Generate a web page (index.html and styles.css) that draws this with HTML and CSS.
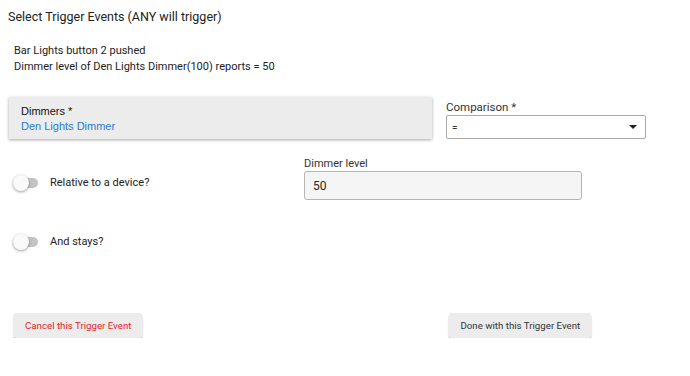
FILE: index.html
```html
<!DOCTYPE html>
<html lang="en">

<head>
    <meta charset="utf-8">
    <title>Select Trigger Events</title>
    <link rel="stylesheet" href="styles.css">
</head>

<body>
    <div class="page">
        <h2 class="title">Select Trigger Events (ANY will trigger)</h2>

        <div class="summary">
            <div>Bar Lights button 2 pushed</div>
            <div>Dimmer level of Den Lights Dimmer(100) reports = 50</div>
        </div>

        <div class="row top-row">
            <div class="card">
                <div class="card-label">Dimmers *</div>
                <div class="card-value">Den Lights Dimmer</div>
            </div>
            <div class="field compare">
                <label class="field-label">Comparison *</label>
                <div class="select">
                    <span>=</span>
                    <span class="caret"></span>
                </div>
            </div>
        </div>

        <div class="row mid-row">
            <div class="toggle-item">
                <span class="switch"><span class="knob"></span></span>
                <span>Relative to a device?</span>
            </div>
            <div class="field level">
                <label class="field-label">Dimmer level</label>
                <div class="input">50</div>
            </div>
        </div>

        <div class="row stays-row">
            <div class="toggle-item">
                <span class="switch"><span class="knob"></span></span>
                <span>And stays?</span>
            </div>
        </div>

        <div class="row buttons">
            <button class="btn cancel">Cancel this Trigger Event</button>
            <button class="btn done">Done with this Trigger Event</button>
        </div>
    </div>
</body>

</html>
```

FILE: styles.css
```css
body {
    margin: 0;
    padding: 0;
    background-color: #fff;
    font-family: Roboto, Arial, sans-serif;
    color: #333;
}

.page {
    padding: 8px 8px 0 8px;
}

.title {
    margin: 0;
    font-size: 12.5px;
    font-weight: 400;
    line-height: 18px;
    color: #222;
}

.summary {
    margin-top: 17px;
    padding-left: 6px;
    font-size: 11px;
    line-height: 16px;
    color: #222;
}

.row {
    display: flex;
}

.top-row {
    margin-top: 22px;
    padding-left: 1px;
}

.card {
    width: 423px;
    height: 42px;
    padding: 7px 0 0 12px;
    box-sizing: border-box;
    background-color: #ececec;
    box-shadow: 0 1px 3px rgba(0, 0, 0, 0.35);
    font-family: "Liberation Sans", Arial, sans-serif;
    font-size: 11px;
    line-height: 15px;
}

.card-label {
    color: #111;
}

.card-value {
    color: #2a7bd0;
}

.field {
    display: flex;
    flex-direction: column;
}

.field-label {
    font-size: 11.5px;
    line-height: 15px;
    color: #333;
}

.compare {
    margin-left: 14px;
    margin-top: 3px;
}

.select {
    width: 200px;
    height: 24px;
    box-sizing: border-box;
    border: 1px solid #aaa;
    border-radius: 2px;
    display: flex;
    align-items: center;
    justify-content: space-between;
    padding: 0 8px 0 5px;
    font-size: 10px;
}

.caret {
    width: 0;
    height: 0;
    border-left: 4px solid transparent;
    border-right: 4px solid transparent;
    border-top: 4px solid #222;
}

.mid-row {
    margin-top: 17px;
    align-items: flex-start;
}

.toggle-item {
    display: flex;
    align-items: center;
    gap: 12px;
    width: 291px;
    padding-left: 5px;
    font-size: 11px;
    color: #222;
}

.mid-row .toggle-item {
    margin-top: 20px;
}

.switch {
    position: relative;
    width: 25px;
    height: 10px;
    border-radius: 5px;
    background-color: #c4c4c4;
}

.knob {
    position: absolute;
    left: 0;
    top: -3px;
    width: 16px;
    height: 16px;
    border-radius: 50%;
    background-color: #fafafa;
    box-shadow: 0 1px 3px rgba(0, 0, 0, 0.4);
}

.level .field-label {
    font-size: 11px;
}

.level .input {
    width: 278px;
    height: 29px;
    box-sizing: border-box;
    border: 1px solid #b5b5b5;
    border-radius: 3px;
    background-color: #f5f5f5;
    padding-left: 8px;
    display: flex;
    align-items: center;
    font-size: 12px;
    color: #222;
}

.stays-row {
    margin-top: 35px;
}

.buttons {
    margin-top: 65px;
    padding-left: 6px;
}

.btn {
    height: 25px;
    padding: 0 11px;
    border: none;
    border-radius: 2px;
    background-color: #ececec;
    box-shadow: 0 2px 2px rgba(0, 0, 0, 0.3);
    font-family: Roboto, Arial, sans-serif;
    font-size: 9.7px;
    cursor: pointer;
}

.cancel {
    color: #e8232a;
}

.done {
    margin-left: 307px;
    color: #333;
}
```
